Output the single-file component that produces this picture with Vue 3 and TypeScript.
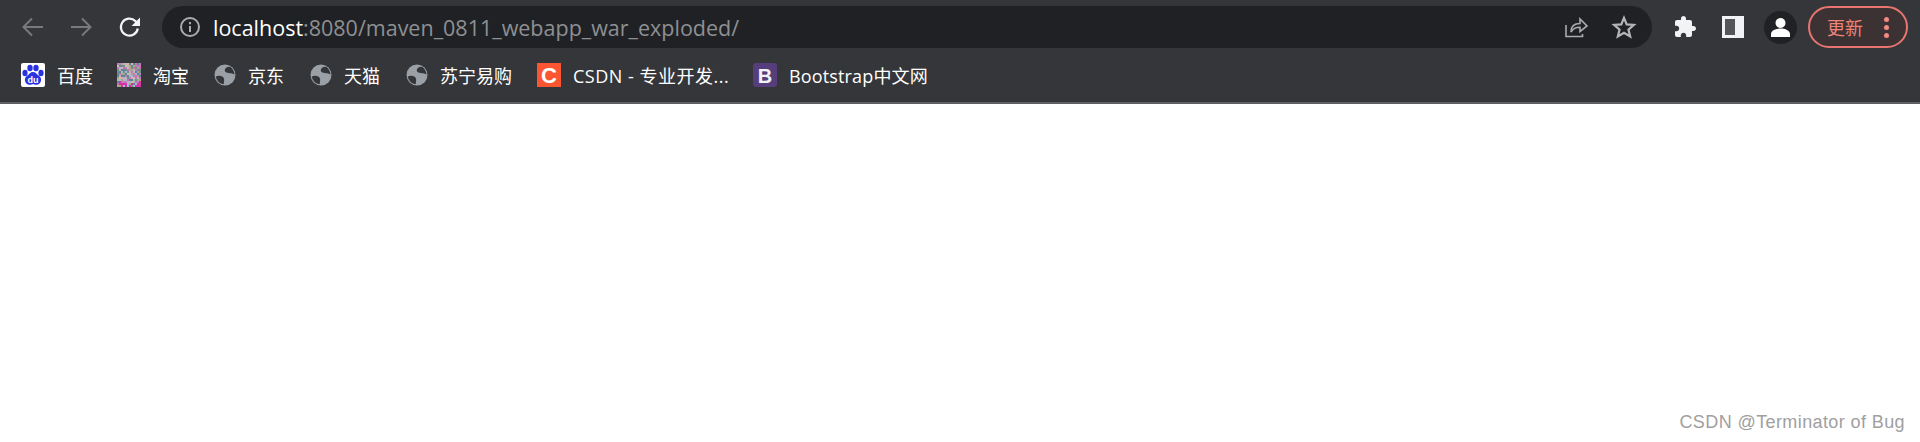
<script setup lang="ts">
const palette = ['#c4b0bc', '#6f8f8a', '#d2bda6', '#5f8496', '#b57fc0', '#a5bccd', '#cf6fb4', '#a8a888', '#d832a8']
const noise: { x: number; y: number; c: string }[] = []
let seed = 7
for (let y = 0; y < 12; y++) {
  for (let x = 0; x < 12; x++) {
    seed = (seed * 31 + 11) % 257
    const base = y > 8 ? seed % 9 : seed % 8
    noise.push({ x: x * 2, y: y * 2, c: palette[y > 9 && seed % 2 ? 8 : base] })
  }
}
const globes = [
  { label: '京东', w: 96 },
  { label: '天猫', w: 96 },
  { label: '苏宁易购', w: 132 }
]
</script>

<template>
  <div class="page">
    <header class="chrome">
      <div class="toolbar">
        <button class="nav"><svg width="24" height="24" viewBox="0 0 24 24" fill="none" stroke="#77797c" stroke-width="2"><path d="M22 12H3M11 3.500 2.500 12l8.500 8.500" /></svg></button>
        <button class="nav"><svg width="24" height="24" viewBox="0 0 24 24" fill="none" stroke="#77797c" stroke-width="2"><path d="M2 12h19M13 3.500l8.500 8.500-8.500 8.500" /></svg></button>
        <button class="nav"><svg width="24" height="24" viewBox="0 0 24 24" fill="none"><path d="M20.800 13.500a8.500 8.500 0 1 1-2.400-7.400l2.600 2.600" stroke="#f1f3f4" stroke-width="2.200" /><path d="M23 2.500v8.500h-8.500z" fill="#f1f3f4" /></svg></button>
        <div class="omnibox">
          <svg class="info" width="22" height="22" viewBox="0 0 22 22" fill="none"><circle cx="11" cy="11" r="9" stroke="#a9abad" stroke-width="2" /><path d="M11 10v6M11 6v2.200" stroke="#a9abad" stroke-width="2" /></svg>
          <div class="url"><span class="host">localhost</span>:8080/maven_0811_webapp_war_exploded/</div>
          <svg class="share" width="26" height="26" viewBox="0 0 26 26" fill="none" stroke="#a9abad" stroke-width="1.600"><path d="M3 11v11.500h16.500V20" /><path d="M8 18c0-6 4-8.500 9-8.500V5l7 7-7 5.500v-4.200c-4 0-7 1-9 4.700z" /></svg>
          <svg class="star" width="26" height="26" viewBox="0 0 24 24" fill="none" stroke="#b4b6b8" stroke-width="2"><path d="m12 3.500 2.500 6.100 6.600.5-5 4.300 1.600 6.400-5.700-3.500-5.700 3.500 1.600-6.400-5-4.300 6.600-.5z" /></svg>
        </div>
        <svg class="tool puzzle" width="24" height="24" viewBox="0 0 24 24" fill="#f1f3f4"><path d="M20.500 11H19V7c0-1.100-.9-2-2-2h-4V3.500C13 2.120 11.880 1 10.500 1S8 2.120 8 3.500V5H4c-1.100 0-1.990.9-1.990 2v3.800H3.500c1.490 0 2.700 1.210 2.700 2.700s-1.210 2.700-2.700 2.700H2V20c0 1.100.9 2 2 2h3.800v-1.500c0-1.490 1.210-2.700 2.700-2.700 1.490 0 2.700 1.210 2.700 2.700V22H17c1.100 0 2-.9 2-2v-4h1.500c1.380 0 2.500-1.120 2.500-2.500S21.880 11 20.500 11z" /></svg>
        <svg class="tool panel" width="22" height="22" viewBox="0 0 22 22"><rect width="22" height="22" fill="#f1f3f4" /><rect x="3" y="3" width="10" height="16" fill="#55565a" /></svg>
        <div class="avatar"><svg width="33" height="33" viewBox="0 0 33 33" fill="#fff"><circle cx="16.500" cy="12" r="5" /><path d="M7 26v-3c0-3.500 5-5.500 9.500-5.500S26 19.500 26 23v3z" /></svg></div>
        <div class="update"><span>更新</span><i class="dots"><b /><b /><b /></i></div>
      </div>
      <nav class="bookmarks">
        <div class="bm bm-first">
          <svg class="fav" width="24" height="24" viewBox="0 0 24 24"><rect width="24" height="24" rx="2" fill="#fff" /><g fill="#2932e1"><ellipse cx="4" cy="10" rx="2.600" ry="3.200" /><ellipse cx="9" cy="5" rx="2.700" ry="3.300" /><ellipse cx="15" cy="5" rx="2.700" ry="3.300" /><ellipse cx="20" cy="10" rx="2.600" ry="3.200" /><path d="M12 9c2.800 0 3.500 2 5.200 3.300 2 1.500 3.300 2.700 2.800 5.400-.5 3-2.800 4.300-4.800 4.100-1.500-.1-2-.6-3.200-.6s-1.700.5-3.200.6c-2 .2-4.300-1.100-4.800-4.100-.5-2.700.8-3.900 2.800-5.400C8.500 11 9.200 9 12 9z" /></g><text class="du" x="12" y="20" text-anchor="middle">du</text></svg>
          <span>百度</span>
        </div>
        <div class="bm bm-taobao">
          <svg class="fav" width="24" height="24" viewBox="0 0 24 24" shape-rendering="crispEdges"><rect v-for="(n, i) in noise" :key="i" :x="n.x" :y="n.y" width="2" height="2" :style="{ fill: n.c }" /></svg>
          <span>淘宝</span>
        </div>
        <div v-for="g in globes" :key="g.label" class="bm" :style="{ width: g.w + 'px' }">
          <svg class="fav globe" width="22" height="22" viewBox="0 0 22 22"><circle cx="11" cy="11" r="10.500" fill="#9aa0a6" /><path d="M12.500 3.500c-2 1.500-2.500 4 0 5 2.500.9 5 .3 8 2-.2-3-1.800-6-4-7.500-1.500-.6-2.800-.4-4 .5zM1.800 12.500c2.500-1 5.300-.8 7.200.5 1.600 1.200 1.300 4 .6 7.300-4-.6-7.300-3.700-7.800-7.800z" fill="#35363a" /></svg>
          <span>{{ g.label }}</span>
        </div>
        <div class="bm bm-csdn">
          <svg class="fav" width="24" height="24" viewBox="0 0 24 24"><rect width="24" height="24" fill="#fc5531" /><text class="logo-c" x="12" y="20" text-anchor="middle">C</text></svg>
          <span>CSDN - 专业开发...</span>
        </div>
        <div class="bm bm-boot">
          <svg class="fav" width="24" height="24" viewBox="0 0 24 24"><rect width="24" height="24" rx="3" fill="#563d7c" /><text class="logo-b" x="12" y="19.500" text-anchor="middle">B</text></svg>
          <span>Bootstrap中文网</span>
        </div>
      </nav>
    </header>
    <main class="content">
      <div class="watermark">CSDN @Terminator of Bug</div>
    </main>
  </div>
</template>

<style>
html, body { margin: 0; background: #fff; }
</style>

<style scoped>
.page {
  width: 1920px;
  height: 442px;
  display: flex;
  flex-direction: column;
  overflow: hidden;
  font-family: "Open Sans", "Noto Sans CJK SC", sans-serif;
}
.chrome {
  height: 102px;
  flex: none;
  background: #35363a;
  border-bottom: 2px solid #5f6064;
  display: flex;
  flex-direction: column;
}
.toolbar {
  height: 42px;
  margin-top: 6px;
  display: flex;
  align-items: center;
  padding-left: 21px;
}
.nav {
  width: 24px;
  height: 24px;
  padding: 0;
  margin-right: 24px;
  border: 0;
  background: none;
  display: flex;
}
.nav:nth-child(3) { margin-right: 21px; }
.omnibox {
  width: 1490px;
  height: 42px;
  flex: none;
  background: #202124;
  border-radius: 21px;
  display: flex;
  align-items: center;
  padding-left: 17px;
  box-sizing: border-box;
}
.info { flex: none; }
.url {
  flex: 1;
  margin-left: 12px;
  font-size: 21.5px;
  color: #8e9093;
  white-space: nowrap;
}
.host { color: #fff; }
.share { flex: none; margin-right: 22px; }
.star { flex: none; margin-right: 15px; }
.tool { flex: none; }
.puzzle { margin-left: 21px; }
.panel { margin-left: 25px; }
.avatar {
  width: 33px;
  height: 33px;
  flex: none;
  margin-left: 20px;
  border-radius: 50%;
  background: #202124;
  overflow: hidden;
}
.avatar svg { display: block; }
.update {
  width: 100px;
  height: 42px;
  flex: none;
  margin-left: 11px;
  box-sizing: border-box;
  border: 2px solid #e8756f;
  border-radius: 21px;
  background: #3c3234;
  color: #ee837a;
  font-size: 18px;
  display: flex;
  align-items: center;
  padding-left: 17px;
}
.dots {
  display: flex;
  flex-direction: column;
  gap: 3px;
  margin-left: 21px;
}
.dots b {
  width: 5px;
  height: 5px;
  border-radius: 50%;
  background: #f28b82;
}
.bookmarks {
  height: 24px;
  margin-top: 15px;
  padding-left: 21px;
  display: flex;
  align-items: center;
  color: #fff;
  font-size: 18px;
  white-space: nowrap;
}
.bm { display: flex; align-items: center; flex: none; }
.bm span { margin-left: 12px; }
.bm .fav { flex: none; }
.bm .globe { margin-left: 1px; }
.bm-first { width: 96px; }
.bm-taobao { width: 96px; }
.bm-csdn { width: 216px; }
.bm-csdn span { letter-spacing: 0.5px; }
.bm-boot span { letter-spacing: 0.15px; }
.du {
  font-family: "Liberation Sans", sans-serif;
  font-size: 9px;
  font-weight: 700;
  fill: #fff;
}
.logo-c {
  font-family: "Liberation Sans", sans-serif;
  font-size: 22px;
  font-weight: 700;
  fill: #fff;
}
.logo-b {
  font-family: "Liberation Sans", sans-serif;
  font-size: 20px;
  font-weight: 700;
  fill: #f1f3f4;
}
.content {
  flex: 1;
  display: flex;
  flex-direction: column;
  justify-content: flex-end;
  align-items: flex-end;
}
.watermark {
  margin: 0 15px 8px 0;
  font-family: "Liberation Sans", sans-serif;
  font-size: 18px;
  line-height: 24px;
  letter-spacing: 0.4px;
  color: #a0a0a0;
}
</style>
